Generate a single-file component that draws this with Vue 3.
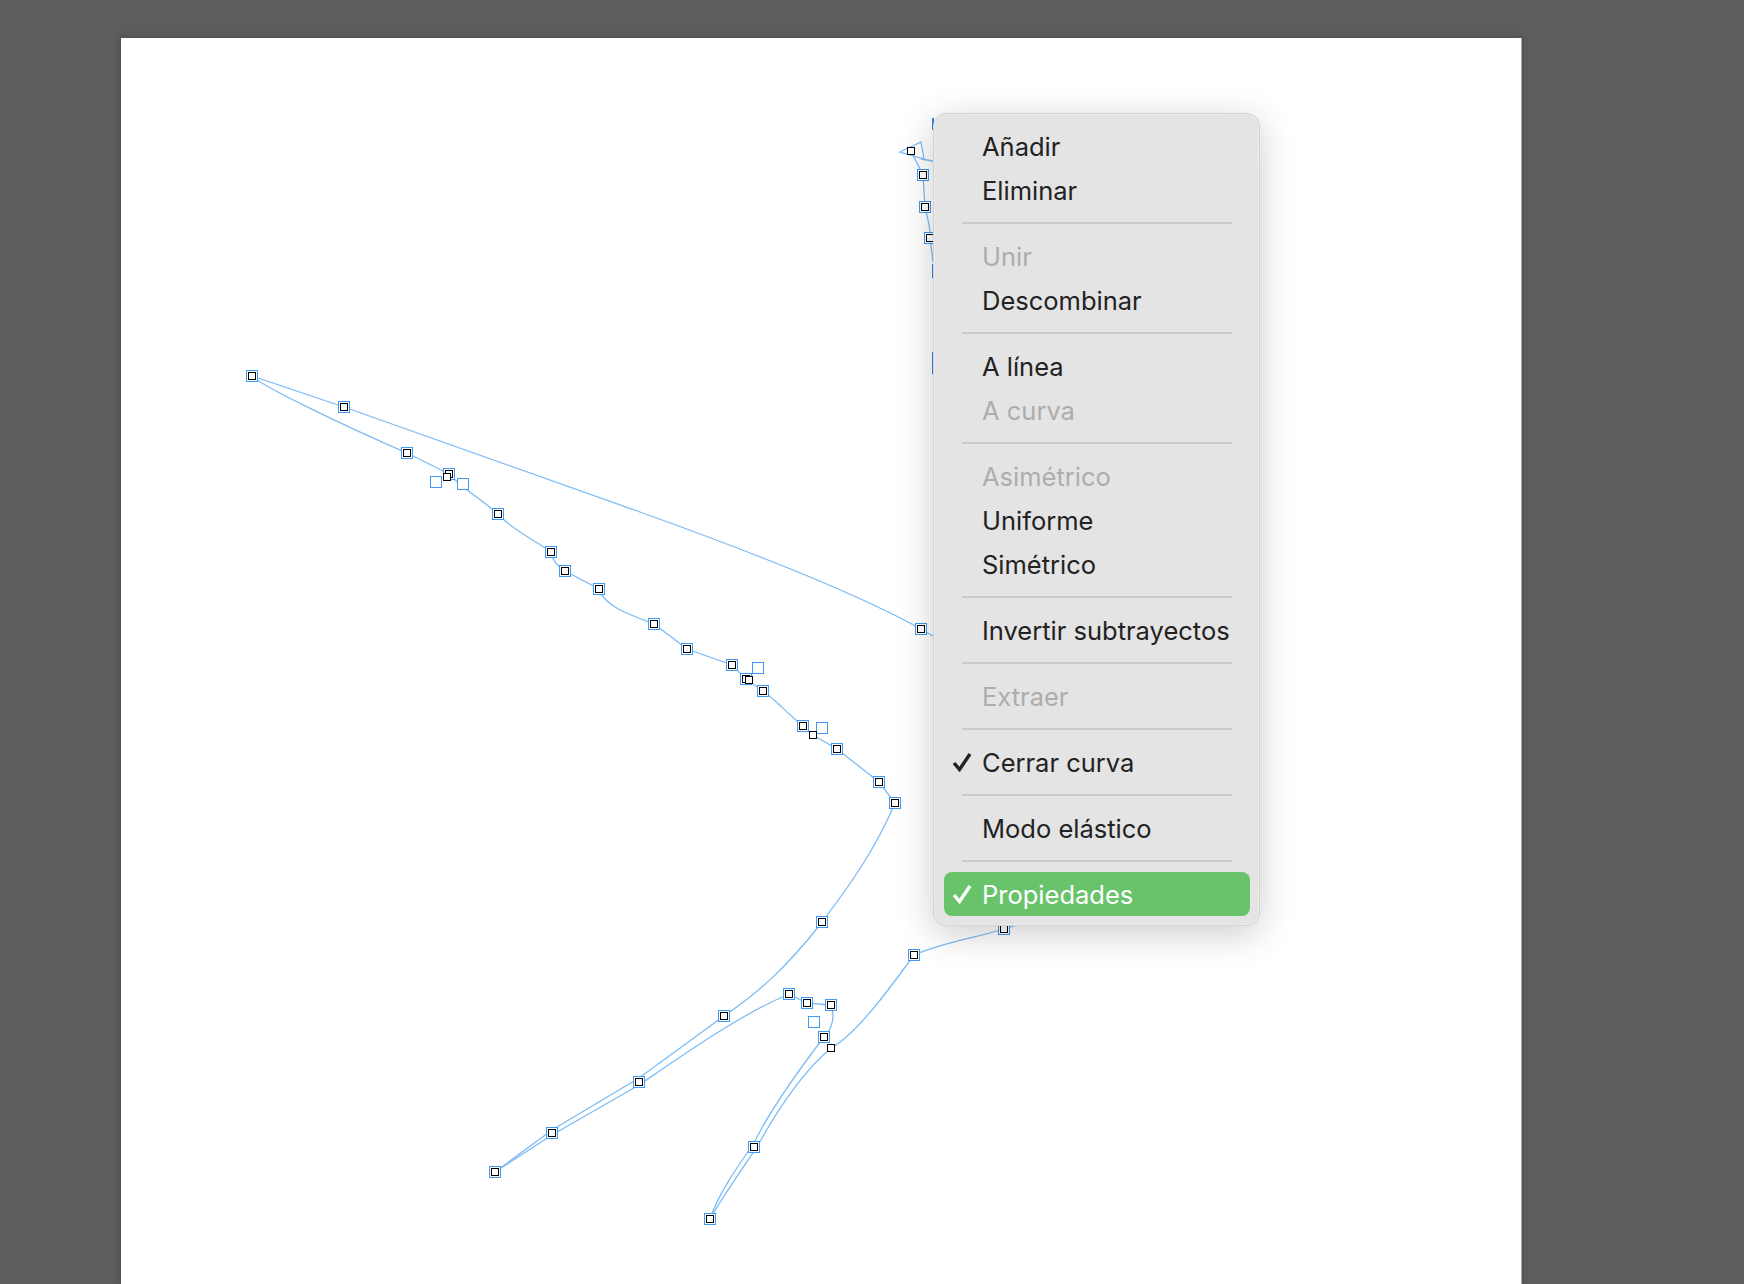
<template>
  <div class="stage">
    <div class="canvas">
      <!-- Curve being edited, in page coordinates -->
      <svg class="curve" viewBox="121 38 1400 1246" width="1400" height="1246">
        <path v-for="(d, i) in outlines" :key="i" :d="d" class="line" />
        <path v-for="(d, i) in fragments" :key="'f' + i" :d="d" class="fragment" />
        <rect
          v-for="(p, i) in [...nodes, ...handles]"
          :key="'o' + i"
          :x="p[0] - 5.5"
          :y="p[1] - 5.5"
          width="11"
          height="11"
          class="outer"
        />
        <rect
          v-for="(p, i) in [...nodes, ...points]"
          :key="'i' + i"
          :x="p[0] - 3.5"
          :y="p[1] - 3.5"
          width="7"
          height="7"
          class="inner"
        />
      </svg>

      <!-- Context menu -->
      <div class="menu">
        <template v-for="(group, g) in groups" :key="g">
          <div v-if="g > 0" class="sep"></div>
          <div
            v-for="item in group"
            :key="item.label"
            class="item"
            :class="{ disabled: item.disabled, active: item.active }"
          >
            <span class="check">
              <svg v-if="item.checked" width="20" height="20" viewBox="0 0 20 20">
                <path d="M2 11 L7.5 17.5 L18 2" />
              </svg>
            </span>
            <span>{{ item.label }}</span>
          </div>
        </template>
      </div>
    </div>
  </div>
</template>

<script setup>
const groups = [
  [{ label: 'Añadir' }, { label: 'Eliminar' }],
  [{ label: 'Unir', disabled: true }, { label: 'Descombinar' }],
  [{ label: 'A línea' }, { label: 'A curva', disabled: true }],
  [{ label: 'Asimétrico', disabled: true }, { label: 'Uniforme' }, { label: 'Simétrico' }],
  [{ label: 'Invertir subtrayectos' }],
  [{ label: 'Extraer', disabled: true }],
  [{ label: 'Cerrar curva', checked: true }],
  [{ label: 'Modo elástico' }],
  [{ label: 'Propiedades', checked: true, active: true }]
]

const nodes = [
  [252, 376], [344, 407], [407, 453], [449, 474], [498, 514], [551, 552], [565, 571], [599, 589],
  [654, 624], [687, 649], [732, 665], [746, 679], [763, 691], [803, 726], [837, 749], [879, 782],
  [895, 803], [921, 629], [822, 922], [724, 1016], [639, 1082], [552, 1133], [495, 1172],
  [789, 994], [807, 1003], [831, 1005], [824, 1037], [754, 1147], [710, 1219], [914, 955],
  [1004, 929], [923, 175], [925, 207], [930, 238]
]

const handles = [[436, 482], [463, 484], [758, 668], [822, 728], [814, 1022]]

// black squares with no blue frame round them
const points = [[447, 477], [749, 680], [813, 735], [831, 1048], [911, 151]]

const outlines = [
  'M252 376 L344 407 L640 512 C760 555 860 595 921 629 L933 636',
  'M252 376 C262 386 340 424 407 453 L449 474 C462 488 482 500 498 514 C512 530 535 540 551 552 C553 562 558 566 565 571 L599 589 C604 606 630 615 654 624 C665 632 675 640 687 649 L732 665 L746 679 L763 691 C778 702 790 716 803 726 L813 735 L837 749 L879 782 L895 803',
  'M895 803 C875 850 850 885 822 922 C785 970 755 995 724 1016 L639 1078 L552 1130 L495 1172',
  'M495 1172 L552 1135 L639 1085 C690 1050 740 1015 789 994 L807 1003 L831 1005 C835 1015 833 1028 824 1037 C795 1075 770 1110 754 1143 C735 1170 718 1195 710 1219',
  'M710 1219 C722 1198 740 1172 757 1147 C780 1105 805 1070 831 1048 C855 1035 885 995 914 955 C945 942 975 938 1004 929 L1020 924',
  'M911 151 L923 175 L925 207 C928 220 931 230 930 238 L933 262',
  'M900 152 L921 142 L924 159 Z',
  'M921 159 L933 161'
]

const fragments = ['M933 118 V130', 'M933 264 V278', 'M933 352 V374']
</script>

<style scoped>
.stage {
  height: 100vh;
  box-sizing: border-box;
  padding: 38px 0 0 121px;
  background: #5d5d5d;
  overflow: hidden;
}

.canvas {
  position: relative;
  width: 1400px;
  height: 100%;
  background: #fff;
  box-shadow: 1px 0 0 #a8a8a8, 0 0 6px 1px rgba(0, 0, 0, 0.2);
}

.curve {
  display: block;
}

.line {
  fill: none;
  stroke: #7cbcf6;
  stroke-width: 1.3;
}

.fragment {
  fill: none;
  stroke: #2f86e6;
  stroke-width: 2;
}

.outer {
  fill: #fff;
  stroke: #3f98f5;
  stroke-width: 1;
}

.inner {
  fill: #fff;
  stroke: #000;
  stroke-width: 1;
}

.menu {
  position: absolute;
  left: 812px;
  top: 75px;
  width: 327px;
  height: 813px;
  box-sizing: border-box;
  padding: 11px 9px 11px 10px;
  background: #e4e4e4;
  border: 1px solid #d2d2d2;
  border-radius: 13px;
  box-shadow: inset 0 0 0 1px #ececec, 0 8px 36px rgba(0, 0, 0, 0.2);
  font-family: Inter, "Liberation Sans", sans-serif;
  font-size: 25.5px;
  color: #222;
}

.item {
  display: flex;
  align-items: center;
  height: 44px;
  padding-bottom: 2px;
  box-sizing: border-box;
  border-radius: 8px;
  white-space: nowrap;
}

.item.disabled {
  color: #adadad;
}

.item.active {
  height: 44px;
  margin-top: -1px;
  padding-bottom: 0;
  background: #69c36b;
  color: #fff;
}

.check {
  width: 38px;
  flex: none;
  display: flex;
  align-items: center;
  padding-left: 8px;
  box-sizing: border-box;
}

.check svg {
  display: block;
}

.check path {
  fill: none;
  stroke: currentColor;
  stroke-width: 3.4;
}

.sep {
  height: 2px;
  margin: 9px 18px 11px;
  background: #c9c9c9;
}
</style>
